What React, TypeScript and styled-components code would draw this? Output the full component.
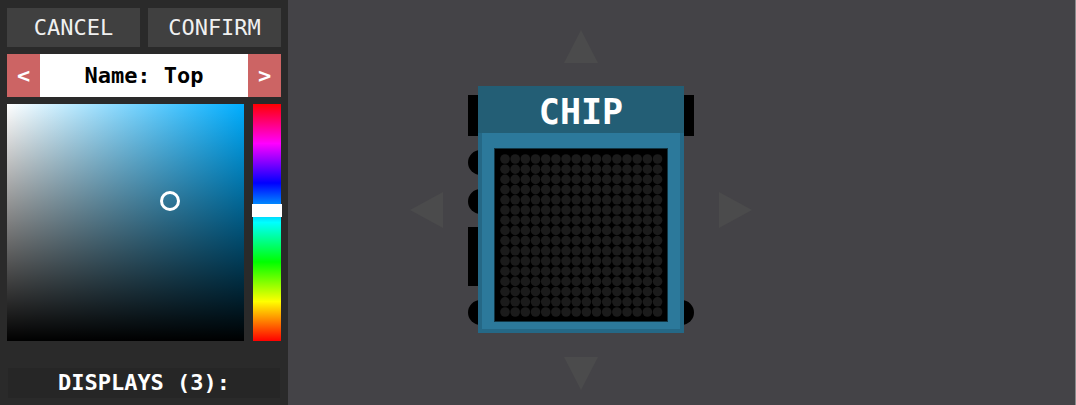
import React from "react";
import styled, { createGlobalStyle } from "styled-components";

const GlobalStyle = createGlobalStyle`
  * { box-sizing: border-box; }
  body {
    margin: 0;
    background: #444347;
    font-family: "DejaVu Sans Mono", "Liberation Mono", monospace;
  }
  button { font: inherit; border: 0; padding: 0; cursor: pointer; }
`;

const Page = styled.div`
  display: flex;
  min-height: 100vh;
`;

const Sidebar = styled.aside`
  flex: 0 0 288px;
  display: flex;
  flex-direction: column;
  gap: 7px;
  padding: 8px 7px 4px;
  background: #2a2a2a;
`;

const ButtonRow = styled.div`
  display: grid;
  grid-template-columns: 1fr 1fr;
  gap: 8px;
`;

const ActionButton = styled.button`
  height: 39px;
  background: #404040;
  color: #f0f0f0;
  font-size: 22px;
  line-height: 39px;
`;

const Cycler = styled.div`
  display: flex;
  height: 43px;
  background: #fff;
`;

const CycleButton = styled.button`
  flex: 0 0 33px;
  background: #cc6464;
  color: #fff;
  font-size: 22px;
  font-weight: bold;
`;

const CycleValue = styled.output`
  flex: 1;
  text-align: center;
  font-size: 22px;
  font-weight: bold;
  line-height: 43px;
  color: #000;
`;

const ColourPicker = styled.div`
  display: flex;
  justify-content: space-between;
`;

const ShadeField = styled.div`
  position: relative;
  width: 237px;
  height: 237px;
  background:
    linear-gradient(to top, #000, transparent),
    linear-gradient(to right, #fff, #00aeff);
`;

const ShadeMarker = styled.span`
  position: absolute;
  width: 20px;
  height: 20px;
  margin: -10px;
  border: 3px solid #fff;
  border-radius: 50%;
`;

const HueSlider = styled.input`
  appearance: none;
  writing-mode: vertical-lr;
  direction: rtl;
  width: 30px;
  height: 237px;
  margin: 0 -1px;
  background: none;

  &::-webkit-slider-runnable-track {
    width: 28px;
    height: 237px;
    margin: 0 1px;
    background: linear-gradient(
      to bottom,
      #f00, #f0f, #00f, #0ff, #0f0, #ff0, #f00
    );
  }

  &::-webkit-slider-thumb {
    appearance: none;
    width: 30px;
    height: 13px;
    margin: 0 -1px;
    background: #fff;
  }
`;

const SectionTitle = styled.h2`
  margin: 20px 1px 0;
  height: 30px;
  background: #262626;
  color: #fff;
  text-align: center;
  font-size: 22px;
  font-weight: bold;
  line-height: 30px;
`;

const Workspace = styled.main`
  position: relative;
  flex: 1;
  overflow: hidden;
  border-right: 1px solid #8a8a8c;
`;

const MoveArrow = styled.svg<{ $x: number; $y: number }>`
  position: absolute;
  left: ${(p) => p.$x}px;
  top: ${(p) => p.$y}px;
  fill: #4b4b4c;
`;

const ChipNode = styled.section`
  position: absolute;
  left: 190px;
  top: 86px;
  width: 206px;
`;

const ChipTitle = styled.h1`
  position: relative;
  margin: 0;
  height: 47px;
  background: #235e75;
  color: #fff;
  text-align: center;
  font-size: 35px;
  font-weight: bold;
  line-height: 52px;
`;

const ChipBody = styled.div`
  position: relative;
  padding: 15px 12px 7px;
  background: #2c799b;
  border: solid #256886;
  border-width: 0 4px 4px;
`;

const DotDisplay = styled.svg`
  display: block;
  width: 100%;
  height: auto;
  background: #000;
  border: 1px solid #123442;
`;

const Pin = styled.span<{ $side: "left" | "right"; $y: number; $size: number; $round?: boolean }>`
  position: absolute;
  ${(p) => p.$side}: -10px;
  top: ${(p) => p.$y}px;
  width: 25px;
  height: ${(p) => p.$size}px;
  background: #000;
  border-radius: ${(p) => (p.$round ? "50%" : "0")};
`;

const arrows = [
  { x: 276, y: 30, w: 34, h: 33, points: "17,0 34,33 0,33" },
  { x: 122, y: 192, w: 33, h: 36, points: "0,18 33,0 33,36" },
  { x: 431, y: 192, w: 33, h: 36, points: "33,18 0,0 0,36" },
  { x: 276, y: 357, w: 34, h: 33, points: "0,0 34,0 17,33" },
];

const steps = Array.from({ length: 16 }, (_, i) => i);

export default function App() {
  const [hue, setHue] = React.useState(199);
  return (
    <>
      <GlobalStyle />
      <Page>
        <Sidebar>
          <ButtonRow>
            <ActionButton type="button">CANCEL</ActionButton>
            <ActionButton type="button">CONFIRM</ActionButton>
          </ButtonRow>
          <Cycler>
            <CycleButton type="button">&lt;</CycleButton>
            <CycleValue>Name: Top</CycleValue>
            <CycleButton type="button">&gt;</CycleButton>
          </Cycler>
          <ColourPicker>
            <ShadeField>
              <ShadeMarker style={{ left: "68.8%", top: "41%" }} />
            </ShadeField>
            <HueSlider
              type="range"
              aria-label="Hue"
              min={0}
              max={360}
              value={hue}
              onChange={(e) => setHue(Number(e.target.value))}
            />
          </ColourPicker>
          <SectionTitle>DISPLAYS (3):</SectionTitle>
        </Sidebar>
        <Workspace>
          {arrows.map((a) => (
            <MoveArrow key={a.points} $x={a.x} $y={a.y} width={a.w} height={a.h}>
              <polygon points={a.points} />
            </MoveArrow>
          ))}
          <ChipNode>
            <Pin $side="left" $y={9} $size={41} />
            <Pin $side="left" $y={64} $size={25} $round />
            <Pin $side="left" $y={103} $size={25} $round />
            <Pin $side="left" $y={141} $size={59} />
            <Pin $side="left" $y={214} $size={25} $round />
            <Pin $side="right" $y={9} $size={41} />
            <Pin $side="right" $y={214} $size={25} $round />
            <ChipTitle>CHIP</ChipTitle>
            <ChipBody>
              <DotDisplay viewBox="0 0 172 172">
                {steps.map((row) =>
                  steps.map((col) => (
                    <circle
                      key={`${row}-${col}`}
                      cx={10 + col * 10.17}
                      cy={10 + row * 10.2}
                      r={4.8}
                      fill="#1b1b1b"
                    />
                  ))
                )}
              </DotDisplay>
            </ChipBody>
          </ChipNode>
        </Workspace>
      </Page>
    </>
  );
}
